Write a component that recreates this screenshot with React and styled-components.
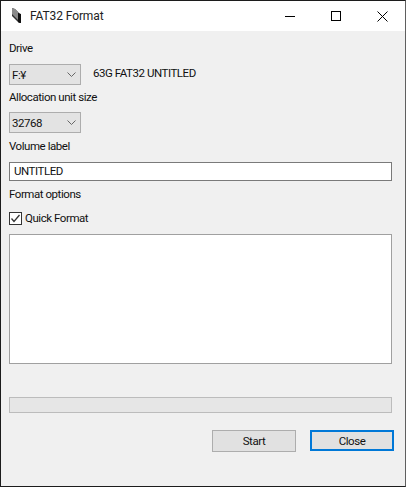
import React from "react";
import styled, { createGlobalStyle } from "styled-components";

const Global = createGlobalStyle`
  html, body { margin: 0; padding: 0; background: #f0f0f0; }
  body { font-family: Roboto, "Open Sans", sans-serif; }
`;

const Win = styled.div`
  width: 406px;
  height: 487px;
  box-sizing: border-box;
  border: 1px solid #1c1c1c;
  border-right-color: #5f5f5f;
  background: #f0f0f0;
  display: flex;
  flex-direction: column;
  color: #111;
  font-size: 11.5px;
  letter-spacing: -0.45px;
  overflow: hidden;
`;

const TitleBar = styled.header`
  height: 30px;
  flex: none;
  background: #fff;
  display: flex;
  align-items: center;
`;

const AppIcon = styled.svg`
  width: 16px;
  height: 16px;
  margin-left: 9px;
`;

const Title = styled.div`
  margin-left: 4px;
  font-size: 12px;
  letter-spacing: -0.1px;
  flex: 1;
  color: #222;
`;

const WinBtn = styled.div`
  width: 46px;
  height: 30px;
  display: flex;
  align-items: center;
  justify-content: center;
`;

const Body = styled.main`
  flex: 1;
  display: flex;
  flex-direction: column;
  padding: 0 12px 0 8px;
  align-items: flex-start;
`;

const Label = styled.div`
  height: 16px;
  line-height: 16px;
  margin-top: ${(p) => p.$top}px;
`;

const Row = styled.div`
  display: flex;
  align-items: center;
  margin-top: ${(p) => p.$top}px;
`;

const Combo = styled.div`
  width: 72px;
  height: 21px;
  box-sizing: border-box;
  border: 1px solid #adadad;
  background: #e3e3e3;
  display: flex;
  align-items: center;
  justify-content: space-between;
  padding: 0 4px 0 2px;
`;

const Info = styled.div`
  margin-left: 12px;
  margin-top: -4px;
`;

const TextBox = styled.div`
  width: 383px;
  height: 19px;
  box-sizing: border-box;
  border: 1px solid #7a7a7a;
  background: #fff;
  padding-left: 4px;
  line-height: 17px;
  margin-top: 8px;
`;

const Check = styled.div`
  width: 13px;
  height: 13px;
  box-sizing: border-box;
  border: 1px solid #333;
  background: #fff;
  display: flex;
  align-items: center;
  justify-content: center;
`;

const CheckText = styled.span`
  margin-left: 3px;
`;

const LogBox = styled.div`
  width: 383px;
  height: 130px;
  box-sizing: border-box;
  border: 1px solid #a0a0a0;
  background: #fff;
  margin-top: 9px;
`;

const Progress = styled.div`
  width: 383px;
  height: 16px;
  box-sizing: border-box;
  border: 1px solid #bcbcbc;
  background: #e6e6e6;
  margin-top: 33px;
`;

const Buttons = styled.div`
  display: flex;
  gap: 14px;
  align-self: flex-end;
  margin: 17px -1px 0 0;
  align-items: flex-start;
`;

const Btn = styled.div`
  width: 84px;
  height: ${(p) => (p.$focus ? 21 : 22)}px;
  box-sizing: border-box;
  border: ${(p) => (p.$focus ? "2px solid #0078d7" : "1px solid #adadad")};
  background: #e1e1e1;
  display: flex;
  align-items: center;
  justify-content: center;
`;

const Chevron = () => (
  <svg width="9" height="5" viewBox="0 0 9 5" fill="none" stroke="#666" strokeWidth="1">
    <path d="M0.5 0.5 L4.5 4.5 L8.5 0.5" />
  </svg>
);

export default function App() {
  return (
    <Win>
      <Global />
      <TitleBar>
        <AppIcon viewBox="0 0 16 16">
          <path d="M2 0 L5 1 L11 7 L11 15 L9 15 L2 8 Z" fill="#2e2e2e" />
          <path d="M2 0 L5 1 L8 4 L8 12 L2 6 Z" fill="#8a8a8a" />
          <path d="M8 5 L11 6 L11 15 L8 14 Z" fill="#111" />
        </AppIcon>
        <Title>FAT32 Format</Title>
        <WinBtn>
          <svg width="10" height="10" viewBox="0 0 10 10"><path d="M0 5.5 H10" stroke="#000" /></svg>
        </WinBtn>
        <WinBtn>
          <svg width="10" height="10" viewBox="0 0 10 10" fill="none"><rect x="0.5" y="0.5" width="9" height="9" stroke="#000" /></svg>
        </WinBtn>
        <WinBtn>
          <svg width="11" height="11" viewBox="0 0 11 11" fill="none"><path d="M0.5 0.5 L10.5 10.5 M10.5 0.5 L0.5 10.5" stroke="#000" /></svg>
        </WinBtn>
      </TitleBar>
      <Body>
        <Label $top={9}>Drive</Label>
        <Row $top={8}>
          <Combo>F:¥<Chevron /></Combo>
          <Info>63G FAT32 UNTITLED</Info>
        </Row>
        <Label $top={4}>Allocation unit size</Label>
        <Row $top={7}>
          <Combo>32768<Chevron /></Combo>
        </Row>
        <Label $top={5}>Volume label</Label>
        <TextBox>UNTITLED</TextBox>
        <Label $top={5}>Format options</Label>
        <Row $top={9}>
          <Check>
            <svg width="11" height="11" viewBox="0 0 11 11" fill="none"><path d="M1.5 5.5 L4 8.5 L9.5 2" stroke="#333" strokeWidth="1.3" /></svg>
          </Check>
          <CheckText>Quick Format</CheckText>
        </Row>
        <LogBox />
        <Progress />
        <Buttons>
          <Btn>Start</Btn>
          <Btn $focus>Close</Btn>
        </Buttons>
      </Body>
    </Win>
  );
}
